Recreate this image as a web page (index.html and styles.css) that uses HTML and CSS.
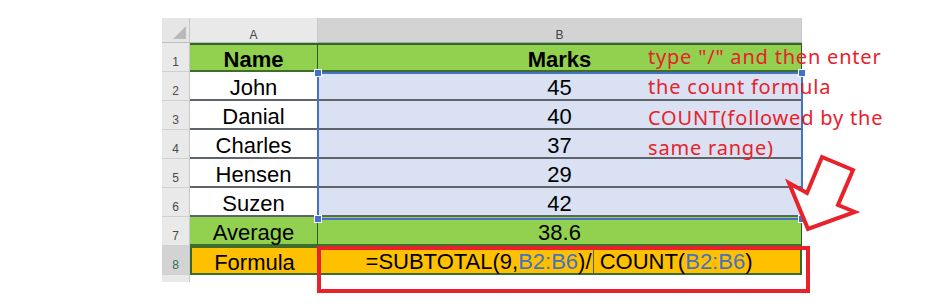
FILE: index.html
```html
<!DOCTYPE html>
<html>
<head>
<meta charset="utf-8">
<link rel="stylesheet" href="styles.css">
</head>
<body>
<div class="stage">
  <div class="sheet">
    <div class="corner"><span class="tri"></span></div>
    <div class="colhead">A</div>
    <div class="colhead sel">B</div>

    <div class="rowhead">1</div>
    <div class="cell green bold">Name</div>
    <div class="cell green bold bcol">Marks</div>

    <div class="rowhead">2</div>
    <div class="cell white">John</div>
    <div class="cell blue bcol">45</div>

    <div class="rowhead">3</div>
    <div class="cell white">Danial</div>
    <div class="cell blue bcol">40</div>

    <div class="rowhead">4</div>
    <div class="cell white">Charles</div>
    <div class="cell blue bcol">37</div>

    <div class="rowhead">5</div>
    <div class="cell white">Hensen</div>
    <div class="cell blue bcol">29</div>

    <div class="rowhead">6</div>
    <div class="cell white">Suzen</div>
    <div class="cell blue bcol">42</div>

    <div class="rowhead">7</div>
    <div class="cell green">Average</div>
    <div class="cell green bcol">38.6</div>

    <div class="rowhead active">8</div>
    <div class="cell orange first">Formula</div>
    <div class="cell orange bcol formula">=SUBTOTAL(9,<span class="ref">B2:B6</span>)/<span class="caret"></span>&nbsp;COUNT(<span class="ref">B2:B6</span>)</div>

    <div class="rowhead tail"></div>
    <div class="tailblank"></div>
    <div class="tailblank"></div>

    <div class="selection">
      <span class="handle h-tl"></span>
      <span class="handle h-tr"></span>
      <span class="handle h-bl"></span>
      <span class="handle h-br"></span>
    </div>
  </div>

  <div class="redbox"></div>

  <div class="note">type "/" and then enter<br>the count formula<br>COUNT(followed by the<br>same range)</div>

  <svg class="arrow" width="80" height="90" viewBox="780 150 80 90">
    <polygon points="808,229 789,183 807,193 822,157 853,170 838,205 855,212" fill="#ffffff" stroke="#e8212b" stroke-width="4" stroke-linejoin="miter"/>
  </svg>
</div>
</body>
</html>
```

FILE: styles.css
```css
html, body {
  margin: 0;
  padding: 0;
  background: #ffffff;
}

.stage {
  position: relative;
  width: 948px;
  height: 305px;
  overflow: hidden;
  font-family: "Liberation Sans", Arial, sans-serif;
}

.sheet {
  position: absolute;
  left: 162px;
  top: 18px;
  display: grid;
  grid-template-columns: 28px 128px 484px;
  grid-template-rows: 25px repeat(8, 29px) 7px;
  background: #ffffff;
}

.corner {
  background: #e6e6e6;
  border-right: 1px solid #c8c8c8;
  border-bottom: 1px solid #bdbdbd;
  position: relative;
}

.tri {
  position: absolute;
  right: 3px;
  bottom: 3px;
  width: 0;
  height: 0;
  border-left: 13px solid transparent;
  border-bottom: 13px solid #b9b9b9;
}

.colhead {
  background: #e9e9e9;
  border-right: 1px solid #c8c8c8;
  border-bottom: 1px solid #bdbdbd;
  display: flex;
  align-items: flex-end;
  justify-content: center;
  padding-bottom: 0;
  font-size: 12px;
  color: #444444;
}

.colhead.sel {
  background: #d3d3d3;
  border-bottom: 1px solid #a8a8a8;
}

.rowhead {
  background: #e9e9e9;
  border-right: 1px solid #c8c8c8;
  border-bottom: 1px solid #d0d0d0;
  display: flex;
  align-items: flex-end;
  justify-content: center;
  padding-bottom: 2px;
  font-size: 12px;
  color: #4a4a4a;
}

.rowhead.active {
  background: #d3d3d3;
  color: #2d6e5a;
}

.rowhead.tail {
  border-bottom: none;
}

.tailblank {
  background: #ffffff;
}

.cell {
  display: flex;
  align-items: center;
  justify-content: center;
  padding-top: 4px;
  font-size: 22px;
  color: #000000;
  border-bottom: 2px solid #5f636a;
  border-right: 1px solid #5f636a;
  white-space: nowrap;
}

.bold {
  font-weight: bold;
}

.green {
  background: #92d050;
  border-bottom-color: #3f6e2c;
  border-right-color: #2f5a22;
}

.sheet .green:nth-child(5),
.sheet .green:nth-child(6) {
  border-top: 2px solid #2f6a2a;
}

.white {
  background: #ffffff;
}

.blue {
  background: #d9e1f2;
}

.orange {
  background: #ffc000;
  border-bottom: 2px solid #3f6e2c;
  border-top: 2px solid #3f6e2c;
}

.orange.first {
  border-left: 2px solid #2f6a2a;
}

.formula {
  border-top: none;
  border-right: 2px solid #2f6a2a;
  padding-top: 4px;
}

.ref {
  color: #4472c4;
}

.caret {
  display: inline-block;
  width: 0;
  height: 27px;
  border-left: 1px solid #4d5d7a;
  margin-left: 1px;
  margin-top: -2px;
}

.selection {
  position: absolute;
  left: 155px;
  top: 54px;
  width: 482px;
  height: 144px;
  border: 2px solid #4472c4;
  pointer-events: none;
}

.handle {
  position: absolute;
  width: 6px;
  height: 6px;
  background: #4472c4;
  border: 1px solid #ffffff;
}

.h-tl { left: -5px; top: -5px; }
.h-tr { right: -5px; top: -5px; }
.h-bl { left: -5px; bottom: -5px; }
.h-br { right: -5px; bottom: -5px; }

.redbox {
  position: absolute;
  left: 317px;
  top: 246px;
  width: 485px;
  height: 39px;
  border: 4px solid #e8212b;
}

.note {
  position: absolute;
  left: 648px;
  top: 42px;
  font-family: "Noto Sans", "Open Sans", sans-serif;
  font-size: 20px;
  letter-spacing: 0.8px;
  line-height: 30.3px;
  color: #e8212b;
  white-space: nowrap;
}

.arrow {
  position: absolute;
  left: 780px;
  top: 150px;
}
```
